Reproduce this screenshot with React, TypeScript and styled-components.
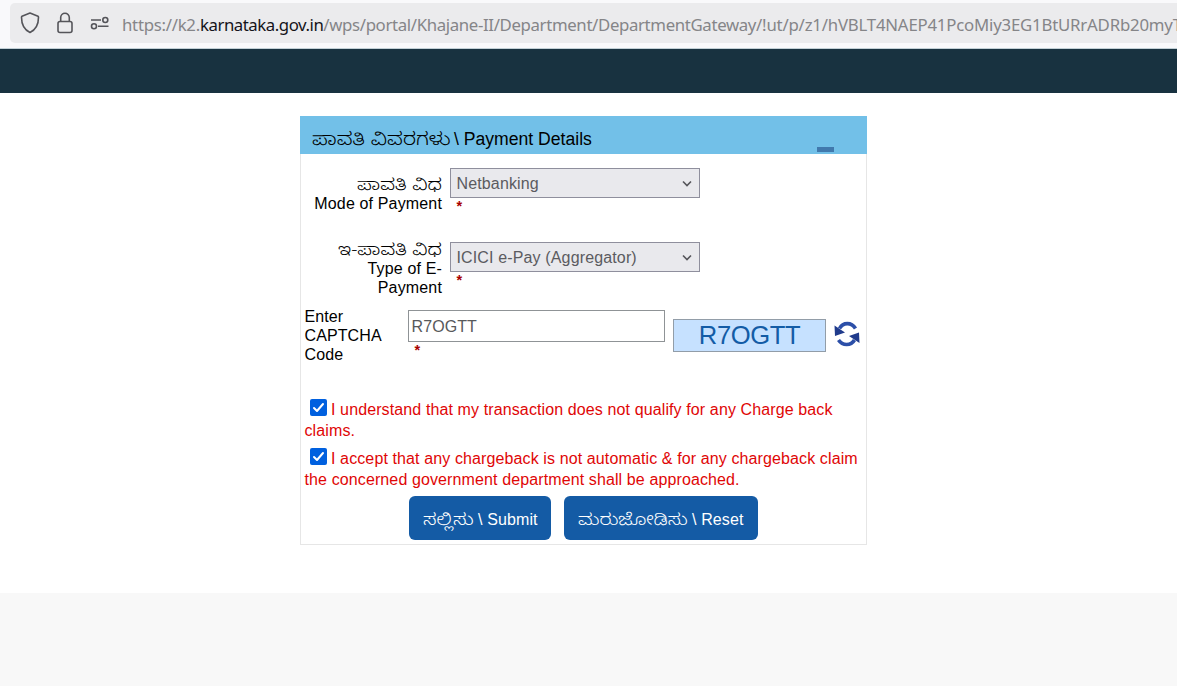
import React from "react";
import styled, { createGlobalStyle } from "styled-components";

const GlobalStyle = createGlobalStyle`
  * { box-sizing: border-box; }
  body { margin: 0; background: #fff; overflow: hidden; font-family: "Liberation Sans", Arial, sans-serif; font-size: 16px; color: #000; }
`;

const Page = styled.div`
  height: 686px;
  overflow: hidden;
  display: flex;
  flex-direction: column;
`;

const BrowserBar = styled.header`
  height: 49px;
  flex: none;
  background: #f9f9fb;
  border-bottom: 1px solid #c2d0d6;
  padding: 3px 0 0 10px;
`;

const AddressField = styled.div`
  height: 40px;
  display: flex;
  align-items: center;
  background: #ebebed;
  border-radius: 5px 0 0 5px;
  padding-left: 9px;
  overflow: hidden;
`;

const BarIcons = styled.div`
  display: flex;
  flex: none;
  gap: 13px;
  width: 103px;
  svg { display: block; flex: none; }
`;

const Url = styled.div`
  display: flex;
  flex: none;
  font: 16.8px/24px "Noto Sans", "Open Sans", sans-serif;
  color: #858588;
  white-space: nowrap;
  padding-top: 3px;
`;

const UrlPart = styled.span<{ $spacing: number; $strong?: boolean }>`
  letter-spacing: ${(p) => p.$spacing}px;
  color: ${(p) => (p.$strong ? "#15141a" : "inherit")};
`;

const NavBand = styled.div`
  height: 44px;
  flex: none;
  background: #183240;
`;

const Main = styled.main`
  height: 500px;
  flex: none;
  padding: 23px 0 0 300px;
`;

const Footer = styled.footer`
  flex: 1;
  background: #f8f8f8;
`;

const Panel = styled.section`
  width: 567px;
  height: 429px;
  border: 1px solid #e6e6e6;
  border-top: 0;
  display: flex;
  flex-direction: column;
`;

const PanelHeader = styled.h2`
  height: 38px;
  flex: none;
  margin: 0 -1px;
  padding: 8px 33px 0 12px;
  display: flex;
  align-items: center;
  background: #72c0e8;
  font-size: 17.6px;
  font-weight: 400;
  white-space: pre;
`;

const CollapseMark = styled.span`
  width: 17px;
  height: 5px;
  margin: 20px 0 0 auto;
  background: #4179ad;
`;

const Kannada = styled.span<{ $width: number; $size: number; $stretch: number }>`
  display: inline-block;
  width: ${(p) => p.$width}px;
  font-family: "Noto Sans Kannada", Tunga, "Nirmala UI", "Liberation Sans", sans-serif;
  font-size: ${(p) => p.$size}px;
  font-weight: 300;
  letter-spacing: 0;
  line-height: 0;
  white-space: nowrap;
  text-align: left;
  transform: scaleX(${(p) => p.$stretch});
  transform-origin: left;
`;

const FieldRow = styled.div<{ $height: number; $top: number }>`
  display: flex;
  flex: none;
  height: ${(p) => p.$height}px;
  padding-top: ${(p) => p.$top}px;
`;

const Label = styled.label<{ $top: number }>`
  width: 141px;
  margin-right: 8px;
  margin-top: ${(p) => p.$top}px;
  text-align: right;
  line-height: 19px;
  letter-spacing: 0.15px;
`;

const SelectBox = styled.div`
  width: 250px;
  height: 30px;
  display: flex;
  align-items: center;
  justify-content: space-between;
  padding: 1px 6px 0 5.500px;
  border: 1px solid #8f8f9d;
  background: #e9e9ed;
  color: #5b5b60;
  letter-spacing: 0.14px;
`;

const Required = styled.div`
  padding-left: 6.500px;
  color: #a80000;
  font-size: 14.500px;
  font-weight: 700;
  line-height: 16px;
`;

const CaptchaRow = styled.div`
  display: flex;
  flex: none;
  height: 92px;
  padding-left: 3.500px;
`;

const CaptchaLabel = styled.label`
  width: 103.500px;
  line-height: 19px;
  letter-spacing: 0.1px;
  padding-top: 1px;
`;

const CaptchaInput = styled.div`
  width: 257px;
  height: 32px;
  margin-top: 4px;
  padding: 0 2.500px;
  border: 1px solid #8f9396;
  color: #58595b;
  line-height: 31px;
  letter-spacing: 0.1px;
`;

const CaptchaCode = styled.div`
  width: 153px;
  height: 33px;
  margin: 13px 0 0 8px;
  border: 1px solid #929da8;
  background: #c6e1ff;
  color: #135ca6;
  font-size: 25.600px;
  letter-spacing: -0.400px;
  line-height: 31px;
  text-align: center;
`;

const RefreshButton = styled.button`
  width: 28px;
  height: 28px;
  margin: 14px 0 0 7px;
  padding: 0;
  border: 0;
  background: none;
  svg { display: block; }
`;

const Consent = styled.p`
  margin: 1px 0 -1px;
  flex: none;
  height: 49px;
  padding-left: 3.500px;
  color: #e00606;
  line-height: 21px;
  letter-spacing: 0.115px;
  white-space: nowrap;
`;

const Checkbox = styled.span`
  display: inline-block;
  width: 17px;
  height: 17px;
  margin: 0 4px 0 5.500px;
  border-radius: 2px;
  background: #0060df;
  vertical-align: top;
  svg { display: block; }
`;

const Actions = styled.div`
  display: flex;
  gap: 13px;
  padding-left: 108px;
`;

const ActionButton = styled.button<{ $width: number }>`
  width: ${(p) => p.$width}px;
  height: 44px;
  padding: 2px 0 0 14px;
  border: 0;
  border-radius: 6px;
  background: #145ba5;
  color: #fff;
  font: 16px/19px "Liberation Sans", Arial, sans-serif;
  letter-spacing: 0.12px;
  text-align: left;
  white-space: pre;
`;

const ShieldIcon = () => (
  <svg width="22" height="24" viewBox="0 0 22 24" fill="none" stroke="#55555a" strokeWidth="1.6" strokeLinejoin="round">
    <path d="M11 2 L19 5.2 Q19.5 5.5 19.5 6.3 C19.5 13.5 17.5 18.5 11 21.5 C4.500 18.500 2.500 13.500 2.500 6.300 Q2.500 5.500 3 5.200 Z" />
  </svg>
);

const LockIcon = () => (
  <svg width="22" height="24" viewBox="0 0 22 24" fill="none" stroke="#55555a" strokeWidth="1.6">
    <rect x="4" y="10.5" width="14" height="11" rx="2" />
    <path d="M6.700 10.500 V6.500 A4.300 4.300 0 0 1 15.300 6.500 V10.500" />
  </svg>
);

const PermissionsIcon = () => (
  <svg width="22" height="24" viewBox="0 0 22 24" fill="none" stroke="#55555a" strokeWidth="1.6">
    <path d="M2 9 H12 M9 15.300 H19.500" />
    <circle cx="16.300" cy="9" r="2.500" />
    <circle cx="5" cy="15.300" r="2.500" />
  </svg>
);

const Chevron = () => (
  <svg width="12" height="10" viewBox="0 0 12 10" fill="none" stroke="#55555a" strokeWidth="1.6">
    <path d="M2 2.500 L6 6.500 L10 2.500" />
  </svg>
);

const RefreshIcon = () => (
  <svg width="28" height="28" viewBox="0 0 28 28" fill="none">
    <path d="M6.500 8.500 C10 2 18.500 2 22.500 8.500" stroke="#2c4fa8" strokeWidth="3.600" />
    <path d="M21.500 20 C18 26 9.500 26 5.500 20" stroke="#2c4fa8" strokeWidth="3.600" />
    <path d="M1.500 5.500 L12 12.500 L2 16 Z M26.500 23 L16 16 L26 12.500 Z" fill="#203b8c" />
  </svg>
);

const Check = () => (
  <Checkbox role="checkbox" aria-checked="true">
    <svg width="17" height="17" viewBox="0 0 17 17" fill="none" stroke="#fff" strokeWidth="2" strokeLinecap="round" strokeLinejoin="round">
      <path d="M4 9 L7 12 L13 5" />
    </svg>
  </Checkbox>
);

export default function App() {
  return (
    <Page>
      <GlobalStyle />
      <BrowserBar>
        <AddressField>
          <BarIcons>
            <ShieldIcon />
            <LockIcon />
            <PermissionsIcon />
          </BarIcons>
          <Url>
            <UrlPart $spacing={-0.27}>https://k2.</UrlPart>
            <UrlPart $spacing={-0.45} $strong>karnataka.gov.in</UrlPart>
            <UrlPart $spacing={-0.35}>/wps/portal/Khajane-II/Department/DepartmentGateway</UrlPart>
            <UrlPart $spacing={-0.2}>/!ut/p/z1/hVBLT4NAEP41PcoMiy3EG1BtURrADRb20myT</UrlPart>
          </Url>
        </AddressField>
      </BrowserBar>
      <NavBand />
      <Main>
        <Panel>
          <PanelHeader>
            <span>
              <Kannada $width={142} $size={17.8} $stretch={1.16}>ಪಾವತಿ ವಿವರಗಳು</Kannada>
              {"\\ Payment Details"}
            </span>
            <CollapseMark />
          </PanelHeader>
          <FieldRow $height={74} $top={14}>
            <Label $top={7}>
              <Kannada $width={85} $size={16.5} $stretch={1.175}>ಪಾವತಿ ವಿಧ</Kannada>
              <br />
              Mode of Payment
            </Label>
            <div>
              <SelectBox>Netbanking<Chevron /></SelectBox>
              <Required>*</Required>
            </div>
          </FieldRow>
          <FieldRow $height={78} $top={14}>
            <Label $top={-2}>
              <Kannada $width={104} $size={16.5} $stretch={1.168}>ಇ-ಪಾವತಿ ವಿಧ</Kannada>
              <br />
              Type of E-
              <br />
              Payment
            </Label>
            <div>
              <SelectBox>ICICI e-Pay (Aggregator)<Chevron /></SelectBox>
              <Required>*</Required>
            </div>
          </FieldRow>
          <CaptchaRow>
            <CaptchaLabel>
              Enter
              <br />
              CAPTCHA
              <br />
              Code
            </CaptchaLabel>
            <div>
              <CaptchaInput>R7OGTT</CaptchaInput>
              <Required>*</Required>
            </div>
            <CaptchaCode>R7OGTT</CaptchaCode>
            <RefreshButton aria-label="Refresh code"><RefreshIcon /></RefreshButton>
          </CaptchaRow>
          <Consent>
            <Check />I understand that my transaction does not qualify for any Charge back
            <br />
            claims.
          </Consent>
          <Consent>
            <Check />I accept that any chargeback is not automatic &amp; for any chargeback claim
            <br />
            the concerned government department shall be approached.
          </Consent>
          <Actions>
            <ActionButton $width={142}>
              <Kannada $width={55} $size={16.8} $stretch={1.17}>ಸಲ್ಲಿಸು</Kannada>
              {"\\ Submit"}
            </ActionButton>
            <ActionButton $width={194}>
              <Kannada $width={114} $size={16.5} $stretch={1.15}>ಮರುಜೋಡಿಸು</Kannada>
              {"\\ Reset"}
            </ActionButton>
          </Actions>
        </Panel>
      </Main>
      <Footer />
    </Page>
  );
}
